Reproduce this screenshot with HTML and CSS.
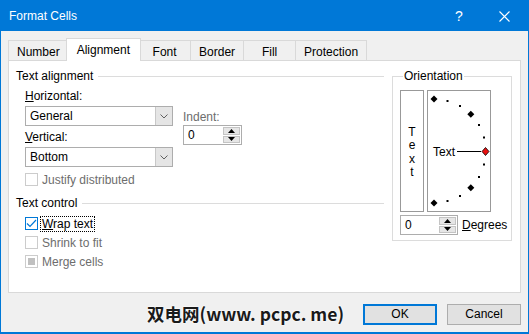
FILE: index.html
```html
<!DOCTYPE html>
<html>
<head>
	<title>Format Cells</title>
	<link rel="stylesheet" href="styles.css">
</head>
<body>
<div class="window">
	<div class="titlebar">
		<span class="title">Format Cells</span>
		<span class="ctl help">?</span>
		<span class="ctl close">
			<svg width="11" height="11" viewBox="0 0 11 11"><path d="M0.5 0.5 L10.5 10.5 M10.5 0.5 L0.5 10.5" stroke="#fff" stroke-width="1.1" fill="none"/></svg>
		</span>
	</div>

	<div class="tabs">
		<div class="tab">Number</div>
		<div class="tab active">Alignment</div>
		<div class="tab">Font</div>
		<div class="tab">Border</div>
		<div class="tab">Fill</div>
		<div class="tab">Protection</div>
	</div>

	<div class="panel">
		<div class="leftCol">
			<div class="groupHead"><span>Text alignment</span><span class="groupLine"></span></div>
			<div class="alignBody">
				<div class="selects">
					<div class="fieldLabel"><u>H</u>orizontal:</div>
					<div class="select first">
						<span class="selValue">General</span>
						<span class="selArrow"><svg width="8" height="5" viewBox="0 0 8 5"><path d="M0.5 0.5 L4 4 L7.5 0.5" stroke="#606060" fill="none"/></svg></span>
					</div>
					<div class="fieldLabel vLabel"><u>V</u>ertical:</div>
					<div class="select first">
						<span class="selValue">Bottom</span>
						<span class="selArrow"><svg width="8" height="5" viewBox="0 0 8 5"><path d="M0.5 0.5 L4 4 L7.5 0.5" stroke="#606060" fill="none"/></svg></span>
					</div>
				</div>
				<div class="indent">
					<div class="fieldLabel dim">Indent:</div>
					<div class="spin indentSpin">
						<span class="spinValue">0</span>
						<span class="spinBtns">
							<span class="spinBtn"><svg width="7" height="4" viewBox="0 0 7 4"><path d="M0 4 L3.5 0 L7 4 Z" fill="#000"/></svg></span>
							<span class="spinBtn"><svg width="7" height="4" viewBox="0 0 7 4"><path d="M0 0 L3.5 4 L7 0 Z" fill="#000"/></svg></span>
						</span>
					</div>
				</div>
			</div>
			<div class="check justify disabled"><span class="box"></span><span class="checkText">Justify distributed</span></div>

			<div class="groupHead controlHead"><span>Text control</span><span class="groupLine"></span></div>
			<div class="check wrap">
				<span class="box on"><svg width="11" height="11" viewBox="0 0 11 11"><path d="M1 5.5 L4 8.5 L10 2" stroke="#0078d7" stroke-width="1.2" fill="none"/></svg></span>
				<span class="checkText focus"><u>W</u>rap text</span>
			</div>
			<div class="check disabled"><span class="box"></span><span class="checkText">Shrink to fit</span></div>
			<div class="check disabled"><span class="box"><span class="mixed"></span></span><span class="checkText">Merge cells</span></div>
		</div>

		<fieldset class="orient">
			<legend>Orientation</legend>
			<div class="orientBoxes">
				<div class="vertText"><span>T</span><span>e</span><span>x</span><span>t</span></div>
				<div class="dial">
					<svg width="62" height="120" viewBox="0 0 62 120">
						<g fill="#000">
							<path d="M6 4.5 L9.5 8 L6 11.5 L2.5 8 Z"/>
							<path d="M42.8 19.7 L46.3 23.2 L42.8 26.7 L39.3 23.2 Z"/>
							<path d="M42.8 93.3 L46.3 96.8 L42.8 100.3 L39.3 96.8 Z"/>
							<path d="M6 108.5 L9.5 112 L6 115.5 L2.5 112 Z"/>
							<rect x="18.5" y="9" width="2" height="2"/>
							<rect x="31" y="14" width="2" height="2"/>
							<rect x="50" y="33" width="2" height="2"/>
							<rect x="55" y="45.5" width="2" height="2"/>
							<rect x="55" y="72.5" width="2" height="2"/>
							<rect x="50" y="85" width="2" height="2"/>
							<rect x="31" y="104" width="2" height="2"/>
							<rect x="18.5" y="109" width="2" height="2"/>
						</g>
						<path d="M29 60.5 L53 60.5" stroke="#000" stroke-width="1"/>
						<path d="M57.5 56.5 L61 60.5 L57.5 64.5 L54 60.5 Z" fill="#e81010" stroke="#000" stroke-width="0.8"/>
						<text x="5" y="65" font-family="Liberation Sans, Arial, sans-serif" font-size="12" fill="#000">Text</text>
					</svg>
				</div>
			</div>
			<div class="degrees">
				<div class="spin degSpin">
					<span class="spinValue">0</span>
					<span class="spinBtns">
						<span class="spinBtn"><svg width="7" height="4" viewBox="0 0 7 4"><path d="M0 4 L3.5 0 L7 4 Z" fill="#000"/></svg></span>
						<span class="spinBtn"><svg width="7" height="4" viewBox="0 0 7 4"><path d="M0 0 L3.5 4 L7 0 Z" fill="#000"/></svg></span>
					</span>
				</div>
				<span class="degLabel"><u>D</u>egrees</span>
			</div>
		</fieldset>
	</div>

	<div class="footer">
		<span class="mark">双电网(www. pcpc. me)</span>
		<button class="btn ok">OK</button>
		<button class="btn">Cancel</button>
	</div>
</div>
</body>
</html>
```

FILE: styles.css
```css
body{
	margin:0;
	font-family:"Liberation Sans", Arial, sans-serif;
	font-size:12px;
	color:#000;
}
.window{
	width:529px;
	height:334px;
	box-sizing:border-box;
	border:1px solid #0078d7;
	border-bottom-width:2px;
	background:#f0f0f0;
}
.titlebar{
	height:30px;
	background:#0078d7;
	color:#fff;
	display:flex;
	align-items:center;
	padding:0 9px 0 8px;
}
.title{
	flex:1;
}
.ctl{
	width:30px;
	height:30px;
	display:flex;
	align-items:center;
	justify-content:center;
}
.help{
	font-size:14px;
	margin-right:15px;
}

/* tabs */
.tabs{
	display:flex;
	align-items:flex-end;
	height:29px;
	padding-left:7px;
	position:relative;
	z-index:1;
}
.tab{
	box-sizing:border-box;
	height:20px;
	min-width:53px;
	padding:3px 8px 0;
	line-height:16px;
	text-align:center;
	border:1px solid #d9d9d9;
	border-bottom:0;
	margin-right:-1px;
	background:#f0f0f0;
}
.tab.active{
	height:23px;
	padding:3px 10px 0;
	margin:0 -3px -1px -2px;
	background:#fff;
	position:relative;
}

/* main panel */
.panel{
	box-sizing:border-box;
	height:233px;
	margin:0 7px;
	background:#fff;
	border:1px solid #d9d9d9;
	display:flex;
	gap:8px;
	padding:8px 0 0 7px;
}
.leftCol{
	width:368px;
}
.groupHead{
	display:flex;
	align-items:center;
	gap:5px;
	line-height:14px;
}
.groupLine{
	flex:1;
	height:1px;
	background:#dcdcdc;
}
.alignBody{
	display:flex;
	gap:10px;
	padding:6px 0 0 9px;
}
.fieldLabel{
	line-height:14px;
}
.dim{
	color:#6d6d6d;
}
.vLabel{
	margin-top:4px;
}
.select{
	box-sizing:border-box;
	width:148px;
	height:20px;
	margin-top:3px;
	border:1px solid #adadad;
	display:flex;
}
.selValue{
	flex:1;
	padding-left:4px;
	line-height:18px;
}
.selArrow{
	width:16px;
	background:#e5e5e5;
	border-left:1px solid #c8c8c8;
	display:flex;
	align-items:center;
	justify-content:center;
}
.indent{
	margin-top:21px;
}
.spin{
	box-sizing:border-box;
	height:20px;
	border:1px solid #adadad;
	display:flex;
	background:#fff;
}
.indentSpin{
	width:59px;
	margin-top:1px;
}
.spinValue{
	flex:1;
	padding-left:4px;
	line-height:18px;
}
.spinBtns{
	width:17px;
	display:flex;
	flex-direction:column;
	padding:1px 1px 1px 0;
	gap:1px;
}
.spinBtn{
	flex:1;
	background:#e6e6e6;
	border:1px solid #c4c4c4;
	display:flex;
	align-items:center;
	justify-content:center;
}

/* check boxes */
.check{
	display:flex;
	align-items:center;
	height:13px;
	padding-left:9px;
	margin-top:6px;
}
.box{
	box-sizing:border-box;
	width:13px;
	height:13px;
	border:1px solid #cccccc;
	display:flex;
	align-items:center;
	justify-content:center;
	background:#fff;
}
.box.on{
	border-color:#0078d7;
}
.mixed{
	width:7px;
	height:7px;
	background:#c0c0c0;
}
.checkText{
	margin-left:4px;
	line-height:14px;
}
.disabled .checkText{
	color:#6d6d6d;
}
.checkText.focus{
	margin-left:2px;
	padding:0 1px;
	border:1px dotted #000;
}
.controlHead{
	margin-top:10px;
}
.wrap{
	margin-top:7px;
}

/* orientation */
.orient{
	box-sizing:border-box;
	width:120px;
	height:172px;
	margin:0;
	padding:7px 0 0 7px;
	border:1px solid #dcdcdc;
}
.orient legend{
	padding:0 1px;
	margin-left:3px;
	line-height:14px;
}
.orientBoxes{
	display:flex;
	gap:3px;
}
.vertText{
	box-sizing:border-box;
	width:24px;
	height:122px;
	border:1px solid #999;
	display:flex;
	flex-direction:column;
	align-items:center;
	justify-content:center;
	line-height:13.5px;
	padding-top:3px;
}
.dial{
	box-sizing:border-box;
	width:64px;
	height:122px;
	border:1px solid #999;
}
.dial svg{
	display:block;
}
.degrees{
	display:flex;
	align-items:center;
	margin-top:3px;
}
.degSpin{
	width:58px;
}
.degLabel{
	margin-left:4px;
}

/* bottom buttons */
.footer{
	display:flex;
	align-items:center;
	justify-content:flex-end;
	padding-right:7px;
	margin-top:10px;
	gap:10px;
}
.mark{
	font-family:"Noto Sans CJK SC", sans-serif;
	font-size:17.5px;
	font-weight:bold;
	line-height:22px;
	color:#1a1a1a;
	text-shadow:0 0 2px #fff, 0 0 2px #fff;
	margin-right:9px;
}
.btn{
	box-sizing:border-box;
	width:74px;
	height:21px;
	padding:0;
	font-family:"Liberation Sans", Arial, sans-serif;
	font-size:12px;
	color:#000;
	background:#e1e1e1;
	border:1px solid #adadad;
}
.btn.ok{
	border:2px solid #0078d7;
}
```
